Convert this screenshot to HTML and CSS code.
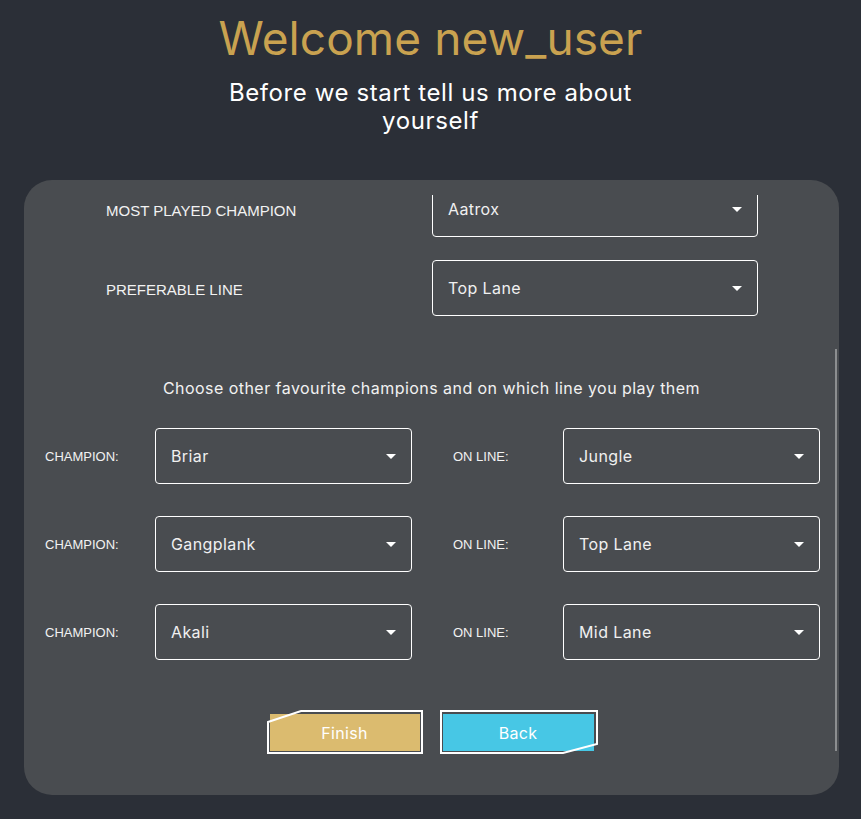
FILE: index.html
```html
<!DOCTYPE html>
<html lang="en">
<head>
<meta charset="utf-8">
<title>Welcome</title>
<link rel="stylesheet" href="styles.css">
</head>
<body>
<header class="header">
  <h1 class="title">Welcome new_user</h1>
  <p class="subtitle">Before we start tell us more about yourself</p>
</header>
<main class="card">
  <div class="viewport">
    <div class="content">
      <div class="top-grid">
        <div class="label big">MOST PLAYED CHAMPION</div>
        <div class="select wide"><span>Aatrox</span><i class="arrow"></i></div>
        <div class="label big">PREFERABLE LINE</div>
        <div class="select wide"><span>Top Lane</span><i class="arrow"></i></div>
      </div>
      <p class="hint">Choose other favourite champions and on which line you play them</p>
      <div class="rows">
        <div class="row">
          <div class="pair"><div class="label small">CHAMPION:</div><div class="select"><span>Briar</span><i class="arrow"></i></div></div>
          <div class="pair"><div class="label small">ON LINE:</div><div class="select"><span>Jungle</span><i class="arrow"></i></div></div>
        </div>
        <div class="row">
          <div class="pair"><div class="label small">CHAMPION:</div><div class="select"><span>Gangplank</span><i class="arrow"></i></div></div>
          <div class="pair"><div class="label small">ON LINE:</div><div class="select"><span>Top Lane</span><i class="arrow"></i></div></div>
        </div>
        <div class="row">
          <div class="pair"><div class="label small">CHAMPION:</div><div class="select"><span>Akali</span><i class="arrow"></i></div></div>
          <div class="pair"><div class="label small">ON LINE:</div><div class="select"><span>Mid Lane</span><i class="arrow"></i></div></div>
        </div>
      </div>
      <div class="buttons">
        <button class="btn finish" type="button">
          <span class="fill">Finish</span>
          <svg class="outline" width="156" height="44" viewBox="0 0 156 44"><polygon points="1,12 34,1 155,1 155,43 1,43" fill="none" stroke="#fff" stroke-width="2"/></svg>
        </button>
        <button class="btn back" type="button">
          <span class="fill">Back</span>
          <svg class="outline" width="158" height="44" viewBox="0 0 158 44"><polygon points="1,1 157,1 157,34 123,43 1,43" fill="none" stroke="#fff" stroke-width="2"/></svg>
        </button>
      </div>
    </div>
  </div>
  <div class="scrollbar"></div>
</main>
</body>
</html>
```

FILE: styles.css
```css
* { box-sizing: border-box; }
html, body { margin: 0; padding: 0; }
body {
  background: #2b2f37;
  font-family: Inter, "Noto Sans", sans-serif;
  color: #fff;
  width: 861px;
  height: 819px;
  overflow: hidden;
}
.header {
  padding-top: 10px;
  text-align: center;
}
.title {
  margin: 0;
  font-size: 46px;
  line-height: 56px;
  font-weight: 400;
  letter-spacing: 0.1px;
  color: #c9a250;
}
.subtitle {
  margin: 13px auto 0;
  width: 440px;
  font-size: 24px;
  line-height: 28px;
  font-weight: 400;
  letter-spacing: 0.6px;
  color: #fff;
}
.card {
  position: relative;
  margin: 45px 0 0 24px;
  width: 815px;
  height: 615px;
  background: #494c50;
  border-radius: 28px;
  padding-top: 15px;
}
.viewport {
  height: 585px;
  overflow: hidden;
}
.content {
  margin-top: -14px;
}
.top-grid {
  display: grid;
  grid-template-columns: 326px 326px;
  row-gap: 23px;
  padding-left: 82px;
  align-items: center;
}
.label {
  font-family: "Liberation Sans", Arial, sans-serif;
  color: #f2f2f2;
}
.label.big { font-size: 15px; padding-top: 2px; }
.label.small { font-size: 13px; }
.select {
  height: 56px;
  border: 1px solid #fff;
  border-radius: 4px;
  display: flex;
  align-items: center;
  justify-content: space-between;
  padding: 0 15px 0 15px;
  font-size: 16px;
  letter-spacing: 0.4px;
  color: #f0f0f0;
}
.arrow {
  display: block;
  width: 0;
  height: 0;
  border-left: 5px solid transparent;
  border-right: 5px solid transparent;
  border-top: 5px solid #fff;
  margin-top: 1px;
}
.hint {
  margin: 62px 0 0;
  text-align: center;
  font-size: 16px;
  line-height: 20px;
  letter-spacing: 0.45px;
  color: #f2f2f2;
}
.rows {
  margin-top: 30px;
  padding-left: 21px;
  display: flex;
  flex-direction: column;
  gap: 32px;
}
.row {
  display: flex;
  gap: 41px;
}
.pair {
  display: grid;
  grid-template-columns: 110px 257px;
  align-items: center;
}
.buttons {
  margin-top: 50px;
  display: flex;
  justify-content: center;
  gap: 17px;
  padding-left: 1px;
}
.btn {
  position: relative;
  height: 44px;
  padding: 3px;
  border: 0;
  background: transparent;
  font-family: inherit;
  cursor: pointer;
}
.btn.finish { width: 156px; padding: 4px 3px 3px 3px; }
.btn.back { width: 158px; padding: 4px 4px 3px 3px; }
.fill {
  display: flex;
  align-items: center;
  justify-content: center;
  height: 100%;
  width: 100%;
  font-size: 16px;
  letter-spacing: 0.3px;
  color: #fff;
}
.finish .fill { background: #dbbb6f; }
.back .fill { background: #47c7e5; }
.outline {
  position: absolute;
  left: 0;
  top: 0;
}
.scrollbar {
  position: absolute;
  right: 2px;
  top: 169px;
  width: 2px;
  height: 402px;
  background: #8c8e90;
}
```
